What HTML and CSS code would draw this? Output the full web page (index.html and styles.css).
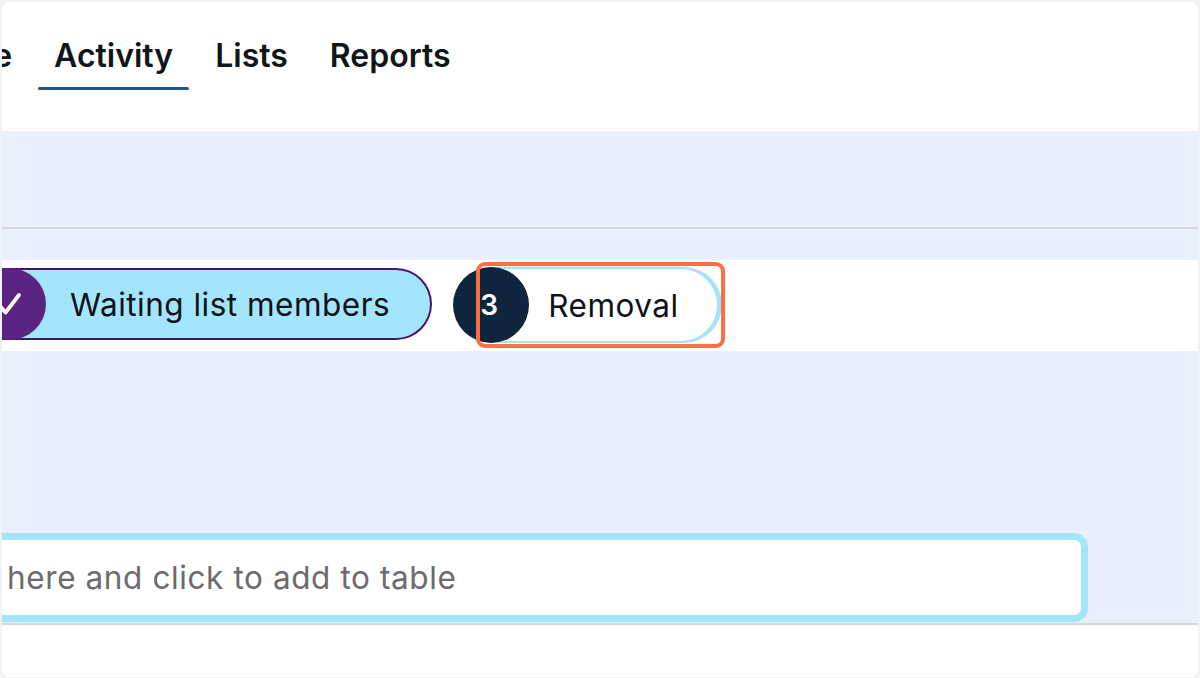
FILE: index.html
```html
<!DOCTYPE html>
<html lang="en">
<head>
<meta charset="utf-8">
<title>Activity</title>
<link rel="stylesheet" href="styles.css">
</head>
<body>
<div class="panel">
  <header class="header">
    <nav class="tabs">
      <a class="tab">Home</a>
      <a class="tab active">Activity</a>
      <a class="tab">Lists</a>
      <a class="tab">Reports</a>
    </nav>
  </header>
  <div class="toolbar"></div>
  <div class="subbar"></div>
  <div class="steps">
    <div class="step done">
      <span class="step-circle">
        <svg width="30" height="30" viewBox="0 0 30 30"><path d="M5 16 L11.5 23.5 L25 6" fill="none" stroke="#fff" stroke-width="3.8" stroke-linecap="round" stroke-linejoin="round"/></svg>
      </span>
      <span class="step-label">Waiting list members</span>
    </div>
    <div class="step current">
      <span class="step-num">3</span>
      <span class="step-pill">Removal</span>
      <span class="focus-ring"></span>
    </div>
  </div>
  <div class="content">
    <div class="search-row">
      <input class="search" type="text" placeholder="here and click to add to table">
    </div>
  </div>
  <div class="footer"></div>
</div>
</body>
</html>
```

FILE: styles.css
```css
html, body {
  margin: 0;
  padding: 0;
}
body {
  background: #f1f1f6;
  font-family: Inter, "Liberation Sans", sans-serif;
  color: #111418;
}
.panel {
  margin: 2px;
  width: 1196px;
  height: 675px;
  background: #ffffff;
  border-radius: 8px;
  overflow: hidden;
}
.header {
  height: 129px;
}
.tabs {
  display: flex;
  gap: 10px;
  margin-left: -97px;
  padding-top: 34px;
}
.tab {
  position: relative;
  font-size: 32px;
  line-height: 40px;
  font-weight: 600;
  padding: 0 16px 14px;
  color: #111418;
  white-space: nowrap;
}
.tab.active::after {
  content: "";
  position: absolute;
  left: 0;
  right: 0;
  bottom: 0;
  height: 3px;
  border-radius: 2px;
  background: #20558f;
}
.toolbar {
  height: 96px;
  background: #e9effc;
  border-bottom: 2px solid #d4d7dc;
}
.subbar {
  height: 31px;
  background: #e9effc;
}
.steps {
  height: 91px;
  background: #ffffff;
  display: flex;
  align-items: flex-start;
  margin-left: -30px;
}
.step.done {
  display: flex;
  align-items: center;
  margin-top: 8px;
  height: 68px;
  background: #a2e5fd;
  border: 2px solid #4a136b;
  border-left: none;
  border-radius: 0 36px 36px 0;
  padding-right: 40px;
}
.step-circle {
  width: 74px;
  height: 72px;
  margin: -2px 0;
  border-radius: 50%;
  background: #5b2382;
  display: flex;
  align-items: center;
  justify-content: center;
}
.step-label {
  margin-left: 24px;
  font-size: 31.5px;
  letter-spacing: 0.5px;
  font-weight: 400;
  color: #0e1116;
}
.step.current {
  position: relative;
  display: flex;
  align-items: center;
  margin-left: 21px;
  margin-top: 7px;
}
.step-num {
  position: relative;
  z-index: 1;
  width: 76px;
  height: 76px;
  border-radius: 50%;
  background: #0f243d;
  color: #ffffff;
  font-size: 28px;
  font-weight: 600;
  display: flex;
  align-items: center;
  justify-content: center;
  padding-right: 4px;
  box-sizing: border-box;
}
.step-pill {
  margin-left: -38px;
  height: 72px;
  display: flex;
  align-items: center;
  padding: 0 38px 0 57px;
  background: #ffffff;
  border: 2px solid #a6e3fb;
  border-left: none;
  border-radius: 0 38px 38px 0;
  box-shadow: 3px 0 0 #a6e3fb;
  font-size: 31.5px;
  letter-spacing: 0.5px;
  color: #0e1116;
}
.focus-ring {
  position: absolute;
  left: 23px;
  top: -5px;
  width: 241px;
  height: 78px;
  border: 4px solid #fa7043;
  border-radius: 9px;
  z-index: 2;
}
.content {
  height: 272px;
  background: #e9effc;
  border-bottom: 2px solid #d4d7dc;
}
.search-row {
  padding-top: 182px;
  padding-right: 110px;
  margin-left: -30px;
}
.search {
  display: block;
  width: 100%;
  box-sizing: border-box;
  height: 89px;
  border: 7px solid #a2e5fd;
  border-radius: 14px;
  padding: 0 0 0 28px;
  background: #ffffff;
  font-family: Inter, "Liberation Sans", sans-serif;
  font-size: 31.5px;
  letter-spacing: 0.6px;
  color: #222;
  outline: none;
}
.search::placeholder {
  color: #6b6b6e;
  opacity: 1;
}
.footer {
  height: 50px;
  background: #ffffff;
}
```
